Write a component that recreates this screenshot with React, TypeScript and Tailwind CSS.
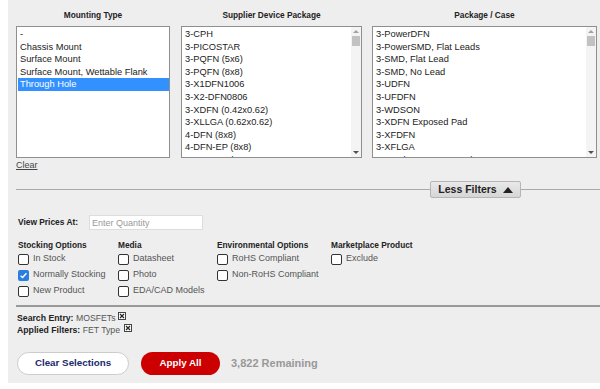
import { useState } from 'react';

const mounting = ['-', 'Chassis Mount', 'Surface Mount', 'Surface Mount, Wettable Flank', 'Through Hole'];
const supplierPkgs = [
  '3-CPH', '3-PICOSTAR', '3-PQFN (5x6)', '3-PQFN (8x8)', '3-X1DFN1006', '3-X2-DFN0806',
  '3-XDFN (0.42x0.62)', '3-XLLGA (0.62x0.62)', '4-DFN (8x8)', '4-DFN-EP (8x8)', '4-DIP Header VMMDIP',
];
const packages = [
  '3-PowerDFN', '3-PowerSMD, Flat Leads', '3-SMD, Flat Lead', '3-SMD, No Lead', '3-UDFN', '3-UFDFN',
  '3-WDSON', '3-XDFN Exposed Pad', '3-XFDFN', '3-XFLGA', '4-DIP (0.300", 7.62mm)',
];

function ListBox({ items, selected, scroll, className }: { items: string[]; selected?: string; scroll?: boolean; className: string }) {
  return (
    <div className={`flex h-[132px] overflow-hidden border border-[#8f8f8f] bg-white ${className}`}>
      <ul className="flex-1 min-w-0 overflow-hidden pt-[1px] pl-[1px]">
        {items.map((it) => (
          <li
            key={it}
            className={`h-[12.6px] pl-[2px] text-[9.3px] leading-[12.6px] whitespace-nowrap ${it === selected ? 'bg-[#3390ff] text-white' : 'text-[#222]'}`}
          >
            {it}
          </li>
        ))}
      </ul>
      {scroll && (
        <div className="flex w-[10px] shrink-0 flex-col items-center bg-[#f4f4f4]">
          <span className="mt-[3px] h-0 w-0 border-x-[3px] border-b-[3px] border-x-transparent border-b-[#a3a3a3]" />
          <span className="mt-[3px] h-[10px] w-[8px] bg-[#c2c2c2]" />
          <span className="flex-1" />
          <span className="mb-[3px] h-0 w-0 border-x-[3px] border-t-[3px] border-x-transparent border-t-[#505050]" />
        </div>
      )}
    </div>
  );
}

function Check({ label, checked }: { label: string; checked?: boolean }) {
  return (
    <label className="flex h-[16px] items-center gap-[4px] whitespace-nowrap text-[9px] text-[#555]">
      {checked ? (
        <span className="flex h-[11px] w-[11px] shrink-0 items-center justify-center rounded-[2px] bg-[#2a7de1]">
          <svg viewBox="0 0 10 10" className="h-[9px] w-[9px]">
            <path d="M1.8 5.2 L4 7.3 L8.3 2.6" fill="none" stroke="white" strokeWidth="1.6" />
          </svg>
        </span>
      ) : (
        <span className="h-[11px] w-[11px] shrink-0 rounded-[2px] border border-[#333] bg-white" />
      )}
      {label}
    </label>
  );
}

function CloseBox() {
  return (
    <span className="ml-[2px] inline-flex h-[8px] w-[8px] items-center justify-center border border-[#444] bg-white align-top">
      <svg viewBox="0 0 6 6" className="h-[6px] w-[6px]">
        <path d="M1 1 L5 5 M5 1 L1 5" stroke="#222" strokeWidth="1.2" />
      </svg>
    </span>
  );
}

export default function App() {
  const [qty, setQty] = useState('');
  return (
    <div className="h-[389px] w-[600px] bg-white pl-[8px] font-['Liberation_Sans',Arial,sans-serif]">
      <div className="h-[383px] bg-[#eeeeee] pt-[9px]">
        <div className="flex pl-[8px] pr-[3px]">
          <div className="w-[154px]">
            <div className="mb-[4px] text-center text-[8.3px] font-bold leading-[13px] text-[#222]">Mounting Type</div>
            <ListBox items={mounting} selected="Through Hole" className="w-[154px]" />
            <a className="mt-[1px] block text-[9px] leading-[12px] text-[#444] underline">Clear</a>
          </div>
          <div className="ml-[11px] w-[181px]">
            <div className="mb-[4px] text-center text-[8.3px] font-bold leading-[13px] text-[#222]">Supplier Device Package</div>
            <ListBox items={supplierPkgs} scroll className="w-[181px]" />
          </div>
          <div className="ml-[10px] flex-1">
            <div className="mb-[4px] text-center text-[8.3px] font-bold leading-[13px] text-[#222]">Package / Case</div>
            <ListBox items={packages} scroll className="w-full" />
          </div>
        </div>

        <div className="mt-[10px] flex items-center pl-[8px]">
          <div className="h-px flex-1 bg-[#aaa]" />
          <button className="flex h-[17px] w-[91px] items-center justify-center gap-[6px] rounded-[2px] border border-[#b5b5b5] bg-gradient-to-b from-[#e9e9e9] to-[#d6d6d6] text-[10.5px] font-bold text-[#222]">
            Less Filters
            <span className="h-0 w-0 border-x-[5px] border-b-[6px] border-x-transparent border-b-[#222]" />
          </button>
          <div className="h-px w-[79px] bg-[#aaa]" />
        </div>

        <div className="mt-[17px] flex items-center pl-[10px]">
          <span className="w-[71px] text-[8.4px] font-bold text-[#222]">View Prices At:</span>
          <input
            value={qty}
            onChange={(e) => setQty(e.target.value)}
            placeholder="Enter Quantity"
            className="h-[15px] w-[114px] border border-[#ddd] bg-white px-[2px] text-[9px] text-[#333] placeholder:text-[#999] outline-none"
          />
        </div>

        <div className="mt-[9px] flex pl-[10px]">
          <div className="w-[100px]">
            <div className="text-[8.3px] font-bold leading-[12px] text-[#222]">Stocking Options</div>
            <Check label="In Stock" />
            <Check label="Normally Stocking" checked />
            <Check label="New Product" />
          </div>
          <div className="w-[99px]">
            <div className="text-[8.3px] font-bold leading-[12px] text-[#222]">Media</div>
            <Check label="Datasheet" />
            <Check label="Photo" />
            <Check label="EDA/CAD Models" />
          </div>
          <div className="w-[114px]">
            <div className="text-[8.3px] font-bold leading-[12px] text-[#222]">Environmental Options</div>
            <Check label="RoHS Compliant" />
            <Check label="Non-RoHS Compliant" />
          </div>
          <div>
            <div className="text-[8.3px] font-bold leading-[12px] text-[#222]">Marketplace Product</div>
            <Check label="Exclude" />
          </div>
        </div>

        <div className="ml-[8px] mt-[6px] h-[2px] bg-[#999]" />

        <div className="mt-[5px] pl-[9px] text-[8.7px] leading-[12px] text-[#555]">
          <div>
            <span className="font-bold text-[#222]">Search Entry:</span> MOSFETs<CloseBox />
          </div>
          <div>
            <span className="font-bold text-[#222]">Applied Filters:</span> FET Type <CloseBox />
          </div>
        </div>

        <div className="mt-[16px] flex items-center pl-[9px]">
          <button className="h-[23px] w-[112px] rounded-full border border-[#ccc] bg-white text-[9.8px] font-bold text-[#1c2a6b]">
            Clear Selections
          </button>
          <button className="ml-[12px] h-[23px] w-[79px] rounded-full bg-[#cc0000] text-[9.8px] font-bold text-white">
            Apply All
          </button>
          <span className="ml-[11px] text-[11px] font-bold text-[#999]">3,822 Remaining</span>
        </div>
      </div>
    </div>
  );
}
